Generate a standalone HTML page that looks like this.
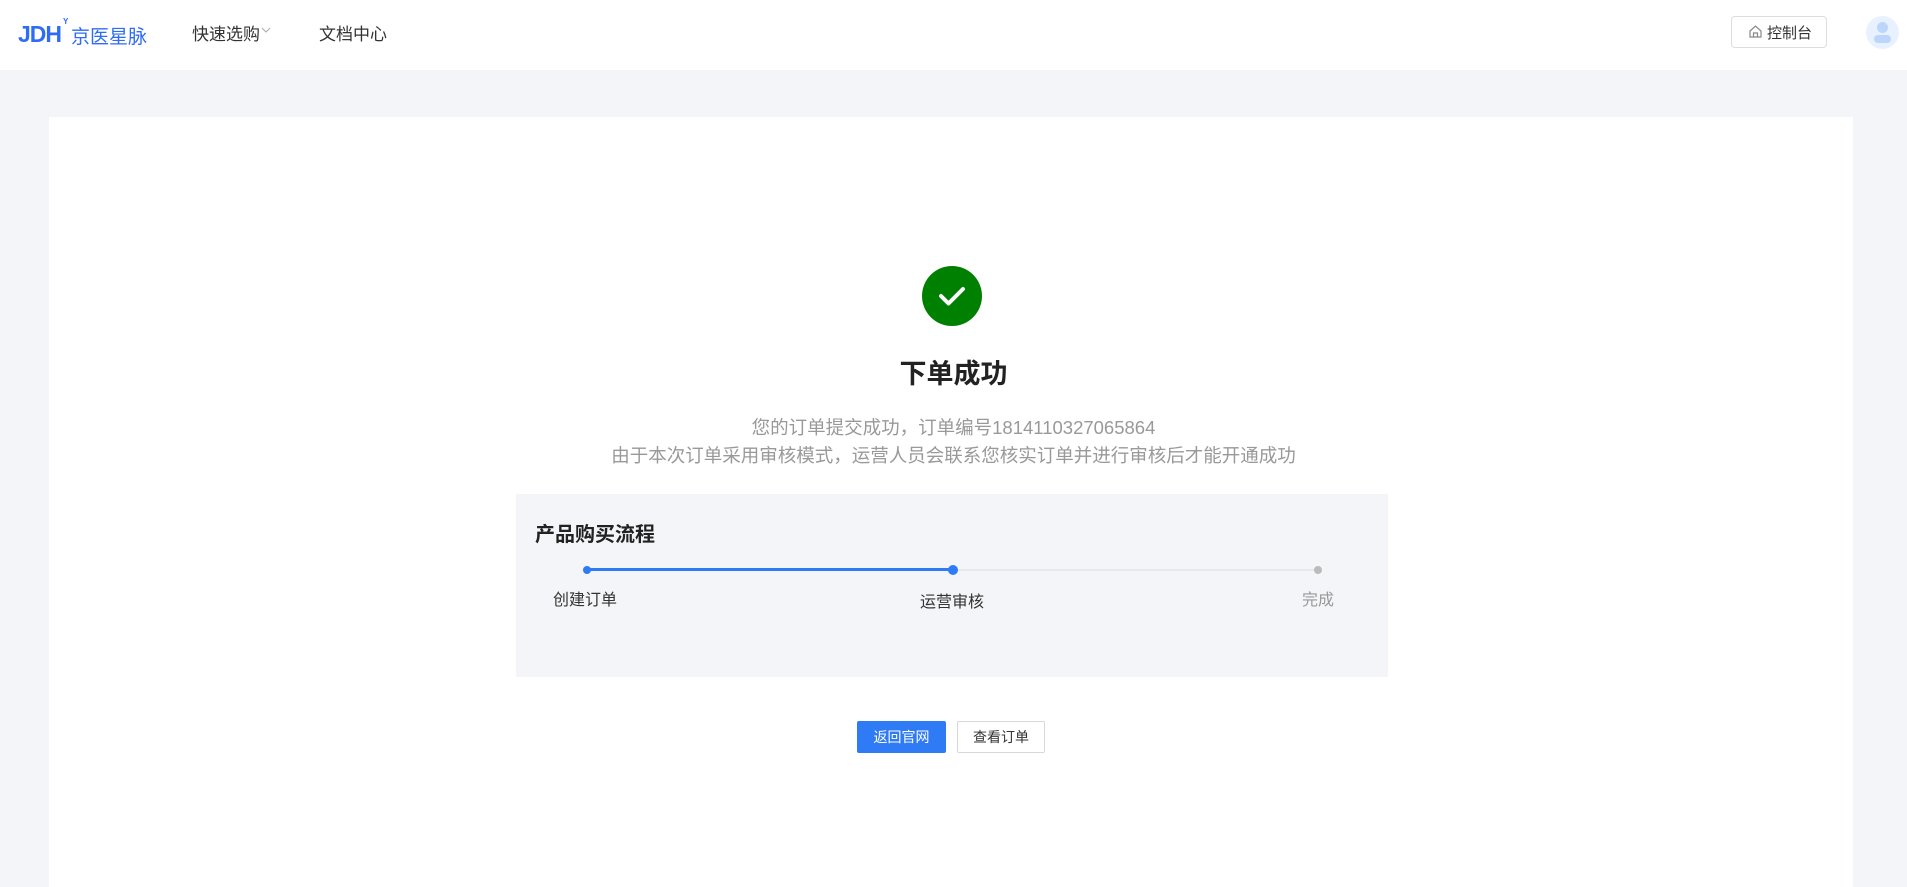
<!DOCTYPE html>
<html><head><meta charset="utf-8"><style>
*{margin:0;padding:0;box-sizing:border-box}
body{width:1907px;height:874px;overflow:hidden;background:#f4f5f8;font-family:"Liberation Sans","Noto Sans CJK SC",sans-serif;color:#222;position:relative}
.hdr{position:absolute;left:0;top:0;width:1907px;height:70px;background:#fff}
.abs{position:absolute;white-space:nowrap}
.card{position:absolute;left:49px;top:117px;width:1804px;height:770px;background:#fff}
</style></head><body>
<div class="hdr">
  <div class="abs" style="left:18px;top:21px;font-size:23px;font-weight:bold;color:#2f6cf6;letter-spacing:-1px">JDH</div>
  <div class="abs" style="left:63px;top:17px;font-size:8px;font-weight:bold;color:#2f6cf6">Y</div>
  <div class="abs" style="left:71px;top:22px;font-size:19px;color:#2f6cf6">京医星脉</div>
  <div class="abs" style="left:192px;top:20px;font-size:17px;color:#333">快速选购</div>
  <svg class="abs" style="left:261px;top:27px" width="10" height="7" viewBox="0 0 10 7"><path d="M1 1l4 4 4-4" fill="none" stroke="#aaa" stroke-width="1"/></svg>
  <div class="abs" style="left:319px;top:20px;font-size:17px;color:#333">文档中心</div>
  <div class="abs" style="left:1731px;top:16px;width:96px;height:32px;border:1px solid #ddd;border-radius:4px"></div>
  <svg class="abs" style="left:1748px;top:24px" width="15" height="15" viewBox="0 0 15 15"><path d="M2 7L7.5 2 13 7V13H2Z M5.5 13V9h4v4" fill="none" stroke="#888" stroke-width="1.2"/></svg>
  <div class="abs" style="left:1767px;top:22px;font-size:15px;color:#333">控制台</div>
  <div class="abs" style="left:1866px;top:16px;width:33px;height:33px;border-radius:50%;background:#e8f1ff;overflow:hidden">
    <div style="position:absolute;left:11px;top:6px;width:11px;height:11px;border-radius:50%;background:#bcd6fb"></div>
    <div style="position:absolute;left:8px;top:19px;width:17px;height:8px;border-radius:4px;background:#bcd6fb"></div>
  </div>
</div>
<div class="card"></div>
<svg class="abs" style="left:922px;top:266px" width="60" height="60" viewBox="0 0 60 60"><circle cx="30" cy="30" r="30" fill="#008000"/><path d="M19 30l7.5 7.5L41 23" fill="none" stroke="#fff" stroke-width="4" stroke-linecap="round" stroke-linejoin="round"/></svg>
<div class="abs" style="left:0;width:1907px;text-align:center;top:352px;font-size:27px;font-weight:bold;color:#222">下单成功</div>
<div class="abs" style="left:0;width:1907px;text-align:center;top:414px;font-size:18.5px;line-height:28px;color:#999">您的订单提交成功，订单编号1814110327065864<br>由于本次订单采用审核模式，运营人员会联系您核实订单并进行审核后才能开通成功</div>
<div class="abs" style="left:516px;top:494px;width:872px;height:183px;background:#f4f5f8"></div>
<div class="abs" style="left:535px;top:518px;font-size:20px;font-weight:bold;color:#222">产品购买流程</div>
<div class="abs" style="left:590px;top:568px;width:360px;height:3px;background:#2f7bf5"></div>
<div class="abs" style="left:956px;top:569px;width:360px;height:2px;background:#e8e8ea"></div>
<div class="abs" style="left:583px;top:566px;width:8px;height:8px;border-radius:50%;background:#2f7bf5"></div>
<div class="abs" style="left:948px;top:565px;width:10px;height:10px;border-radius:50%;background:#2f7bf5"></div>
<div class="abs" style="left:1314px;top:566px;width:8px;height:8px;border-radius:50%;background:#bbb"></div>
<div class="abs" style="left:553px;top:586px;font-size:16px;color:#333">创建订单</div>
<div class="abs" style="left:920px;top:588px;font-size:16px;color:#333">运营审核</div>
<div class="abs" style="left:1302px;top:586px;font-size:16px;color:#999">完成</div>
<div class="abs" style="left:857px;top:721px;width:89px;height:32px;background:#2f7bf5;border-radius:2px;color:#fff;font-size:14px;line-height:32px;text-align:center">返回官网</div>
<div class="abs" style="left:957px;top:721px;width:88px;height:32px;background:#fff;border:1px solid #d8d8d8;border-radius:2px;color:#333;font-size:14px;line-height:30px;text-align:center">查看订单</div>
</body></html>
